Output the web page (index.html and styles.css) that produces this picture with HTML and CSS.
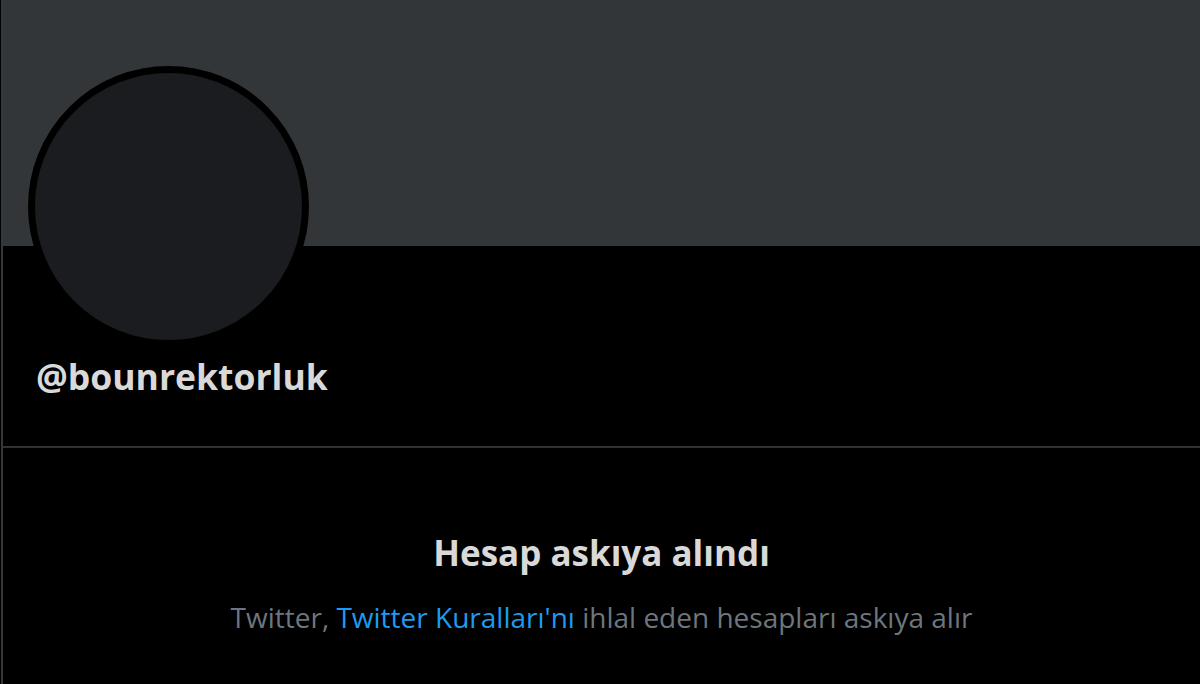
FILE: index.html
```html
<!DOCTYPE html>
<html lang="tr">

<head>
    <meta charset="UTF-8">
    <meta name="viewport" content="width=device-width, initial-scale=1.0">
    <title>@bounrektorluk</title>
    <link rel="stylesheet" href="styles.css">
</head>

<body>
    <div class="profile">
        <div class="banner"></div>
        <div class="avatar"></div>
        <h2 class="username">@bounrektorluk</h2>
    </div>
    <div class="suspended">
        <h3 class="title">Hesap askıya alındı</h3>
        <p class="note">Twitter, <a href="#">Twitter Kuralları'nı</a> ihlal eden hesapları askıya alır</p>
    </div>
</body>

</html>
```

FILE: styles.css
```css
* {
    margin: 0;
    padding: 0;
    box-sizing: border-box;
}

body {
    background: #000;
    height: 684px;
    overflow: hidden;
    margin-left: 1px;
    border-left: 2px solid #36393c;
    font-family: "Open Sans", "Noto Sans", sans-serif;
}

.profile {
    border-bottom: 2px solid #2f3336;
    height: 448px;
}

.banner {
    height: 246px;
    background-color: #333639;
}

.avatar {
    width: 281px;
    height: 281px;
    margin: -180px 0 0 25px;
    border: 7px solid #000;
    border-radius: 50%;
    background-color: #1a1c1f;
}

.username {
    margin: 9px 0 0 33px;
    font-size: 35.5px;
    line-height: 40px;
    font-weight: 700;
    color: #d9d9d9;
}

.suspended {
    text-align: center;
    padding-top: 83px;
}

.title {
    font-size: 35px;
    line-height: 44px;
    font-weight: 700;
    color: #d9d9d9;
}

.note {
    margin-top: 25px;
    font-size: 28px;
    line-height: 34px;
    color: #6e767d;
}

.note a {
    color: #1d9bf0;
    text-decoration: none;
}
```
